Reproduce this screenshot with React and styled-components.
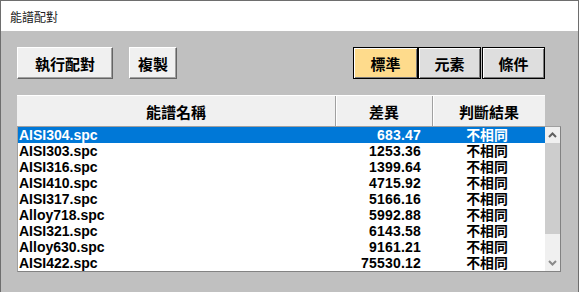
import React from "react";
import styled, { createGlobalStyle } from "styled-components";

const Global = createGlobalStyle`
  html, body { margin: 0; padding: 0; background: #c0c0c0; }
  body { width: 579px; height: 292px; overflow: hidden; }
`;

const CJK = `"Noto Sans CJK TC", "Noto Sans CJK SC", sans-serif`;
const LATIN = `"Liberation Sans", Arial, "Noto Sans CJK TC", sans-serif`;

const Window = styled.div`
  width: 579px;
  height: 292px;
  box-sizing: border-box;
  border: 1px solid #6e6e6e;
  border-bottom: none;
  display: flex;
  flex-direction: column;
  background: #c0c0c0;
`;

const TitleBar = styled.div`
  height: 30px;
  background: #ffffff;
  display: flex;
  align-items: center;
  padding-left: 9px;
  font-family: ${CJK};
  font-size: 12px;
  color: #222;
`;

const Body = styled.div`
  flex: 1;
  padding: 16px 0 0 16px;
  display: flex;
  flex-direction: column;
`;

const Toolbar = styled.div`
  display: flex;
  align-items: stretch;
  height: 32px;
  width: 528px;
`;

const ActionButton = styled.button`
  width: ${(p) => p.$w}px;
  margin-right: ${(p) => p.$mr || 0}px;
  height: 32px;
  box-sizing: border-box;
  padding: 0;
  background: #f0f0f0;
  border-top: 1px solid #ffffff;
  border-left: 1px solid #ffffff;
  border-right: 1px solid #646464;
  border-bottom: 1px solid #646464;
  box-shadow: inset -1px -1px 0 #a0a0a0;
  font-family: ${CJK};
  font-weight: 700;
  font-size: 15px;
  color: #000;
  display: flex;
  align-items: center;
  justify-content: center;
`;

const Spacer = styled.div`
  flex: 1;
`;

const ToggleButton = styled.button`
  width: ${(p) => p.$w}px;
  margin-left: ${(p) => p.$ml || 0}px;
  height: 32px;
  box-sizing: border-box;
  padding: 0;
  background: ${(p) => (p.$active ? "#fedb8c" : "#dedede")};
  border: 1px solid #000;
  box-shadow: inset 1px 1px 0 #ffffff, inset -1px -1px 0 #7a7a7a;
  font-family: ${CJK};
  font-weight: 700;
  font-size: 15px;
  color: #000;
  display: flex;
  align-items: center;
  justify-content: center;
`;

const Table = styled.div`
  margin-top: 16px;
  width: 544px;
  display: flex;
  flex-direction: column;
`;

const Header = styled.div`
  width: 528px;
  height: 31px;
  box-sizing: border-box;
  display: grid;
  grid-template-columns: 319px 97px 112px;
  background: #f0f0f0;
  border-top: 1px solid #ffffff;
`;

const HeadCell = styled.div`
  display: flex;
  align-items: center;
  justify-content: center;
  font-family: ${CJK};
  font-weight: 700;
  font-size: 15px;
  color: #000;
  box-sizing: border-box;
  border-right: ${(p) => (p.$last ? "none" : "1px solid #a0a0a0")};
  box-shadow: ${(p) => (p.$first ? "none" : "inset 1px 0 0 #ffffff")};
`;

const List = styled.div`
  width: 544px;
  height: 146px;
  box-sizing: border-box;
  border: 1px solid #828282;
  border-left-color: #a0a0a0;
  border-top-color: #a0a0a0;
  background: #ffffff;
  display: flex;
`;

const Rows = styled.div`
  width: 527px;
  display: flex;
  flex-direction: column;
`;

const Row = styled.div`
  height: 16px;
  display: grid;
  grid-template-columns: 318px 97px 112px;
  align-items: center;
  background: ${(p) => (p.$sel ? "#0078d7" : "transparent")};
  color: ${(p) => (p.$sel ? "#ffffff" : "#000000")};
`;

const NameCell = styled.div`
  font-family: ${LATIN};
  font-weight: 700;
  font-size: 14px;
  padding-left: 1px;
  line-height: 16px;
  height: 16px;
`;

const NumCell = styled.div`
  font-family: ${LATIN};
  font-weight: 700;
  font-size: 14px;
  text-align: right;
  padding-right: 12px;
  line-height: 16px;
  height: 16px;
  letter-spacing: 0.2px;
`;

const ResultCell = styled.div`
  font-family: ${LATIN};
  font-weight: 700;
  font-size: 13.9px;
  text-align: center;
  line-height: 16px;
  height: 16px;
  padding-right: 4px;
`;

const ScrollBar = styled.div`
  width: 15px;
  background: #f0f0f0;
  display: flex;
  flex-direction: column;
`;

const Arrow = styled.div`
  height: 16px;
  display: flex;
  align-items: center;
  justify-content: center;
`;

const Track = styled.div`
  flex: 1;
  display: flex;
  flex-direction: column;
`;

const Thumb = styled.div`
  height: 91px;
  background: #cdcdcd;
`;

const Chevron = ({ down }) => (
  <svg width="9" height="6" viewBox="0 0 9 6">
    <path
      d={down ? "M1 1 L4.5 4.5 L8 1" : "M1 5 L4.5 1.5 L8 5"}
      fill="none"
      stroke={down ? "#8a8a8a" : "#606060"}
      strokeWidth="2"
    />
  </svg>
);

const data = [
  ["AISI304.spc", "683.47"],
  ["AISI303.spc", "1253.36"],
  ["AISI316.spc", "1399.64"],
  ["AISI410.spc", "4715.92"],
  ["AISI317.spc", "5166.16"],
  ["Alloy718.spc", "5992.88"],
  ["AISI321.spc", "6143.58"],
  ["Alloy630.spc", "9161.21"],
  ["AISI422.spc", "75530.12"],
];

export default function App() {
  return (
    <>
      <Global />
      <Window>
        <TitleBar>能譜配對</TitleBar>
        <Body>
          <Toolbar>
            <ActionButton $w={96} $mr={16}>執行配對</ActionButton>
            <ActionButton $w={48}>複製</ActionButton>
            <Spacer />
            <ToggleButton $w={65} $active>標準</ToggleButton>
            <ToggleButton $w={63}>元素</ToggleButton>
            <ToggleButton $w={63} $ml={1}>條件</ToggleButton>
          </Toolbar>
          <Table>
            <Header>
              <HeadCell $first>能譜名稱</HeadCell>
              <HeadCell>差異</HeadCell>
              <HeadCell $last>判斷結果</HeadCell>
            </Header>
            <List>
              <Rows>
                {data.map(([name, diff], i) => (
                  <Row key={name} $sel={i === 0}>
                    <NameCell>{name}</NameCell>
                    <NumCell>{diff}</NumCell>
                    <ResultCell>不相同</ResultCell>
                  </Row>
                ))}
              </Rows>
              <ScrollBar>
                <Arrow>
                  <Chevron />
                </Arrow>
                <Track>
                  <Thumb />
                </Track>
                <Arrow>
                  <Chevron down />
                </Arrow>
              </ScrollBar>
            </List>
          </Table>
        </Body>
      </Window>
    </>
  );
}
